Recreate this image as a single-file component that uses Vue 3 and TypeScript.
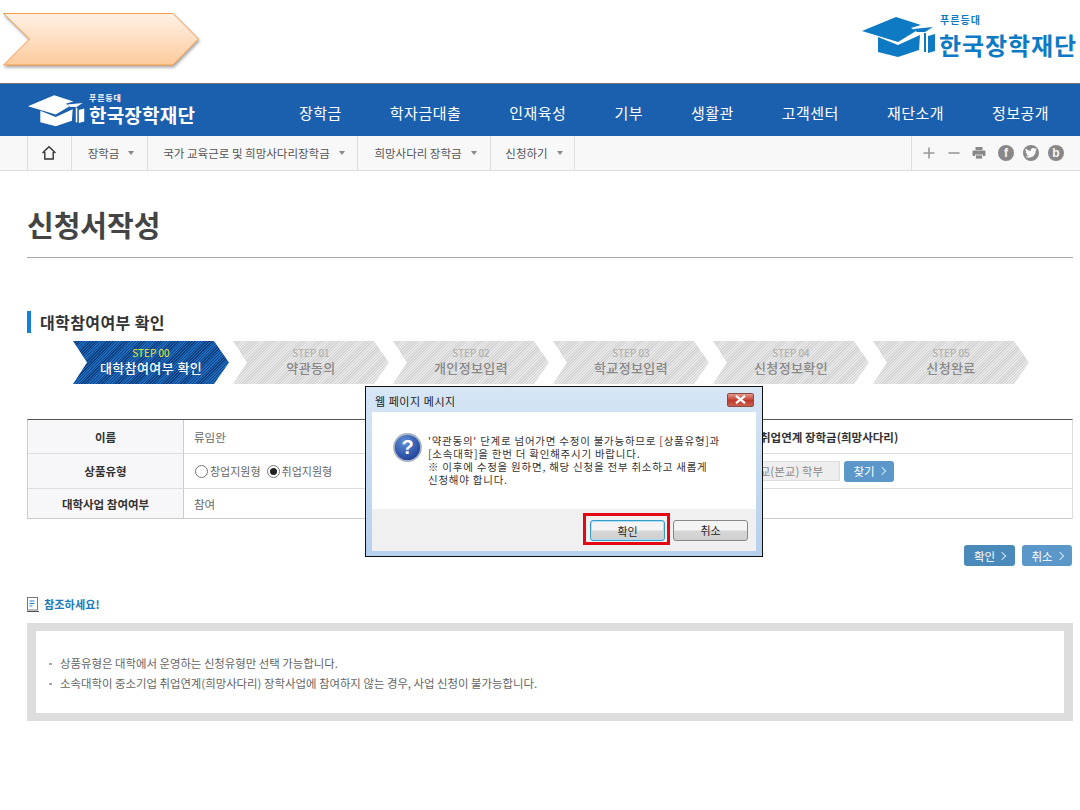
<script setup lang="ts">
const navItems: string[] = ['장학금', '학자금대출', '인재육성', '기부', '생활관', '고객센터', '재단소개', '정보공개']
const crumbs: { label: string; width: number }[] = [
  { label: '장학금', width: 76 },
  { label: '국가 교육근로 및 희망사다리장학금', width: 210 },
  { label: '희망사다리 장학금', width: 133 },
  { label: '신청하기', width: 85 },
]
const steps: { no: string; label: string; active: boolean }[] = [
  { no: 'STEP 00', label: '대학참여여부 확인', active: true },
  { no: 'STEP 01', label: '약관동의', active: false },
  { no: 'STEP 02', label: '개인정보입력', active: false },
  { no: 'STEP 03', label: '학교정보입력', active: false },
  { no: 'STEP 04', label: '신청정보확인', active: false },
  { no: 'STEP 05', label: '신청완료', active: false },
]
</script>

<template>
  <div class="page">
    <header class="top">
      <svg class="arrow" width="204" height="60" viewBox="0 0 204 60">
        <defs>
          <linearGradient id="arrowFill" x1="0" y1="0" x2="0" y2="1">
            <stop offset="0" stop-color="#fff1e6" />
            <stop offset="1" stop-color="#fdcb9c" />
          </linearGradient>
        </defs>
        <polygon class="arrow-shape" points="3.5,0.5 173,0.5 198.5,26 173,52 3.5,52 29.5,26" fill="url(#arrowFill)" stroke="#f79a4a" stroke-width="1" />
      </svg>
      <div class="logo logo-top">
        <svg class="cap" viewBox="0 0 74 44">
          <polygon points="0,17 34,3 59,11 49,14 54,17 36,28" />
          <polygon points="51,15 71,13 63,18 55,18" />
          <polygon points="16,23 36,31 58,21 57,36 36,43 16,38" />
          <rect x="62" y="19" width="2" height="19" />
          <polygon points="66,22 73,20 73,37 66,39" />
        </svg>
        <div class="logo-words">
          <span class="logo-sub">푸른등대</span>
          <span class="logo-name">한국장학재단</span>
        </div>
      </div>
    </header>

    <nav class="gnb">
      <div class="logo logo-nav">
        <svg class="cap" viewBox="0 0 74 44">
          <polygon points="0,17 34,3 59,11 49,14 54,17 36,28" />
          <polygon points="51,15 71,13 63,18 55,18" />
          <polygon points="16,23 36,31 58,21 57,36 36,43 16,38" />
          <rect x="62" y="19" width="2" height="19" />
          <polygon points="66,22 73,20 73,37 66,39" />
        </svg>
        <div class="logo-words">
          <span class="logo-sub">푸른등대</span>
          <span class="logo-name">한국장학재단</span>
        </div>
      </div>
      <ul class="gnb-list">
        <li v-for="item in navItems" :key="item">{{ item }}</li>
      </ul>
    </nav>

    <div class="crumb">
      <div class="crumb-left">
        <div class="crumb-home">
          <svg width="16" height="16" viewBox="0 0 16 16" fill="none" stroke="#333" stroke-width="1.4">
            <path d="M1.5 8 8 1.8 14.5 8M3.8 7v7h8.4V7" />
          </svg>
        </div>
        <div v-for="c in crumbs" :key="c.label" class="crumb-item" :style="{ width: c.width + 'px' }">
          <span>{{ c.label }}</span><i class="tri"></i>
        </div>
      </div>
      <div class="crumb-tools">
        <svg class="tool" width="14" height="14" viewBox="0 0 14 14" stroke="#999" stroke-width="1.6"><path d="M1.5 7h11M7 1.5v11" /></svg>
        <svg class="tool" width="14" height="14" viewBox="0 0 14 14" stroke="#999" stroke-width="1.6"><path d="M1.5 7h11" /></svg>
        <svg class="tool tool-print" width="14" height="14" viewBox="0 0 14 14" fill="#888">
          <rect x="3.5" y="1" width="7" height="3" />
          <rect x="0.5" y="4.6" width="13" height="5.4" rx="1" />
          <rect x="3.5" y="9" width="7" height="4" fill="#888" stroke="#f8f8f8" stroke-width="0.8" />
        </svg>
        <span class="sns">f</span>
        <span class="sns">
          <svg width="12" height="10" viewBox="0 0 24 20" fill="#f8f8f8">
            <path d="M24 2.4a9.6 9.6 0 0 1-2.8.8A5 5 0 0 0 23.3.5a9.8 9.8 0 0 1-3.1 1.2 4.9 4.9 0 0 0-8.4 4.5A14 14 0 0 1 1.7 1a4.9 4.9 0 0 0 1.5 6.6 4.9 4.9 0 0 1-2.2-.6 4.9 4.9 0 0 0 3.9 4.9 5 5 0 0 1-2.2.1 4.9 4.9 0 0 0 4.6 3.4A9.9 9.9 0 0 1 0 17.4 14 14 0 0 0 7.5 19.6c9.1 0 14-7.500 14-14v-.6A10 10 0 0 0 24 2.400z" />
          </svg>
        </span>
        <span class="sns">b</span>
      </div>
    </div>

    <main class="main">
      <h1 class="title">신청서작성</h1>
      <h2 class="section">대학참여여부 확인</h2>

      <ol class="steps">
        <li v-for="s in steps" :key="s.no" class="step" :class="{ on: s.active }">
          <span class="step-no">{{ s.no }}</span>
          <span class="step-label">{{ s.label }}</span>
        </li>
      </ol>

      <div class="table">
        <div class="th">이름</div>
        <div class="td">류임완</div>
        <div class="td td-right strong">취업연계 장학금(희망사다리)</div>

        <div class="th">상품유형</div>
        <div class="td radios">
          <span class="radio"></span><span>창업지원형</span>
          <span class="radio checked"></span><span>취업지원형</span>
        </div>
        <div class="td td-right search">
          <span class="field">교(본교) 학부</span>
          <span class="btn btn-sm">찾기<b class="gt"></b></span>
        </div>

        <div class="th last">대학사업 참여여부</div>
        <div class="td last">참여</div>
        <div class="td td-right last"></div>
      </div>

      <div class="actions">
        <span class="btn btn-dark">확인<b class="gt"></b></span>
        <span class="btn">취소<b class="gt"></b></span>
      </div>

      <h3 class="note-title">
        <svg width="12" height="15" viewBox="0 0 12 15" fill="none">
          <rect x="0.5" y="0.5" width="10" height="12.500" stroke="#777" />
          <path d="M2.500 4h5M2.500 6.500h5M2.500 9h3" stroke="#1f7fc4" />
          <path d="M0 14.500h12" stroke="#555" />
        </svg>
        참조하세요!
      </h3>
      <div class="note">
        <p>상품유형은 대학에서 운영하는 신청유형만 선택 가능합니다.</p>
        <p>소속대학이 중소기업 취업연계(희망사다리) 장학사업에 참여하지 않는 경우, 사업 신청이 불가능합니다.</p>
      </div>
    </main>

    <div class="dialog">
      <div class="dialog-bar">
        <span>웹 페이지 메시지</span>
        <span class="close">
          <svg width="11" height="9" viewBox="0 0 11 9" stroke="#fff" stroke-width="2.2"><path d="M1 .8l9 7.400M10 .8l-9 7.400" /></svg>
        </span>
      </div>
      <div class="dialog-body">
        <div class="dialog-msg">
          <svg class="q" width="29" height="29" viewBox="0 0 29 29">
            <defs>
              <radialGradient id="qFill" cx="0.4" cy="0.3" r="0.8">
                <stop offset="0" stop-color="#5f8fd8" />
                <stop offset="1" stop-color="#17358f" />
              </radialGradient>
            </defs>
            <circle cx="14.500" cy="14.500" r="13.500" fill="url(#qFill)" stroke="#a9b2c2" stroke-width="1.800" />
            <text x="14.500" y="21" text-anchor="middle" class="q-mark">?</text>
          </svg>
          <p>'약관동의' 단계로 넘어가면 수정이 불가능하므로 [상품유형]과<br />[소속대학]을 한번 더 확인해주시기 바랍니다.<br />※ 이후에 수정을 원하면, 해당 신청을 전부 취소하고 새롭게<br />신청해야 합니다.</p>
        </div>
        <div class="dialog-foot">
          <span class="focus-ring"><span class="win-btn primary">확인</span></span>
          <span class="win-btn">취소</span>
        </div>
      </div>
    </div>
  </div>
</template>

<style>
html, body { margin: 0; background: #fff; }
</style>

<style scoped>
.page {
  position: relative;
  width: 1080px;
  height: 810px;
  overflow: hidden;
  background: #fff;
  font-family: "Noto Sans CJK KR", "Noto Sans", sans-serif;
  color: #555;
  font-size: 11px;
}
ul, ol { list-style: none; margin: 0; padding: 0; }
h1, h2, h3, p { margin: 0; }

.top {
  height: 83px;
  display: flex;
  justify-content: space-between;
  align-items: flex-start;
  padding: 13px 3px 0 0;
  box-sizing: border-box;
}
.arrow { display: block; }
.arrow-shape { filter: drop-shadow(1px 2px 1.5px rgba(0, 0, 0, 0.35)); }

.logo { display: flex; align-items: flex-end; }
.logo-words { display: flex; flex-direction: column; }
.logo-sub, .logo-name { font-weight: 700; white-space: nowrap; }
.logo-top { color: #0e7ac4; margin-top: 1px; align-items: flex-start; }
.logo-top .cap { width: 74px; height: 44px; fill: #0e7ac4; margin-right: 3px; }
.logo-top .logo-sub { font-size: 10px; line-height: 12px; letter-spacing: 1px; margin: 0 0 4px 1px; }
.logo-top .logo-name { font-size: 24px; line-height: 30px; letter-spacing: 0.9px; }
.logo-nav { color: #fff; width: 167px; }
.logo-nav .cap { width: 57px; height: 34px; fill: #fff; margin-right: 4px; flex: none; }
.logo-nav .logo-sub { font-size: 8px; line-height: 10px; letter-spacing: 0.8px; }
.logo-nav .logo-name { font-size: 19px; line-height: 24px; letter-spacing: 0.2px; }

.gnb {
  height: 53px;
  box-sizing: border-box;
  border-top: 1px solid #777;
  background: #1b60ae;
  display: flex;
  align-items: center;
  padding-left: 28px;
}
.gnb-list {
  display: flex;
  gap: 48px;
  margin-left: 104px;
  padding-top: 5px;
  color: #fff;
  font-size: 15px;
  letter-spacing: 0.48px;
  white-space: nowrap;
}

.crumb {
  height: 35px;
  box-sizing: border-box;
  background: #f8f8f8;
  border-bottom: 1px solid #ddd;
  display: flex;
  justify-content: space-between;
  padding: 0 7px 0 27px;
}
.crumb-left { display: flex; }
.crumb-home {
  width: 41px;
  display: flex;
  align-items: center;
  justify-content: center;
  border-left: 1px solid #ddd;
  padding-right: 2px;
  box-sizing: content-box;
}
.crumb-item {
  box-sizing: border-box;
  border-left: 1px solid #ddd;
  display: flex;
  align-items: center;
  justify-content: center;
  gap: 9px;
  padding-left: 3px;
  font-size: 11.500px;
  color: #555;
  white-space: nowrap;
}
.crumb-item:last-child { border-right: 1px solid #ddd; }
.tri {
  width: 0;
  height: 0;
  border-left: 3px solid transparent;
  border-right: 3px solid transparent;
  border-top: 4px solid #888;
}
.crumb-tools {
  width: 162px;
  box-sizing: border-box;
  border-left: 1px solid #ddd;
  display: flex;
  align-items: center;
  gap: 9px;
  padding-left: 9px;
}
.tool { margin: 0 1px; }
.tool-print { margin-right: 3px; }
.sns {
  width: 16px;
  height: 16px;
  border-radius: 50%;
  background: #888;
  color: #f8f8f8;
  font-family: "Liberation Sans", sans-serif;
  font-size: 12px;
  font-weight: 700;
  line-height: 16px;
  display: flex;
  align-items: center;
  justify-content: center;
}

.main { padding: 0 7px 0 27px; }
.title {
  height: 87px;
  box-sizing: border-box;
  padding-top: 31px;
  border-bottom: 1px solid #aaa;
  font-size: 29px;
  line-height: 44px;
  font-weight: 700;
  color: #444;
}
.section {
  margin-top: 53px;
  border-left: 4px solid #1480d8;
  height: 22px;
  padding-left: 9px;
  font-size: 16px;
  line-height: 22px;
  font-weight: 700;
  color: #333;
  letter-spacing: 0.4px;
  white-space: nowrap;
}

.steps {
  display: flex;
  gap: 4px;
  margin: 8px 0 0 46px;
}
.step {
  width: 156px;
  height: 43px;
  display: flex;
  flex-direction: column;
  align-items: center;
  justify-content: flex-start;
  clip-path: polygon(0 0, 141px 0, 100% 50%, 141px 100%, 0 100%, 14px 50%);
  background: repeating-linear-gradient(135deg, #d4d4d4 0 1px, #e8e8e8 1px 2px);
  color: #888;
  white-space: nowrap;
  padding: 5px 0 0;
  box-sizing: border-box;
}
.step.on {
  background: repeating-linear-gradient(135deg, #0e3f7c 0 1px, #1c6cc2 1px 2px);
  color: #fff;
}
.step-no { font-size: 10px; line-height: 13px; color: #aaa; }
.step.on .step-no { color: #eaec2a; }
.step-label { font-size: 13px; line-height: 17px; font-weight: 500; letter-spacing: 0.4px; }

.table {
  margin-top: 35px;
  display: grid;
  grid-template-columns: 156px 1fr 384px;
  grid-template-rows: 34px 35px 30px;
  border-top: 1px solid #555;
  border-left: 1px solid #ccc;
  border-right: 1px solid #ddd;
  box-sizing: border-box;
}
.th, .td {
  display: flex;
  align-items: center;
  box-sizing: border-box;
  border-bottom: 1px solid #ddd;
  font-size: 11.500px;
  white-space: nowrap;
}
.th {
  justify-content: center;
  background: #f7f7f9;
  border-right: 1px solid #ccc;
  font-weight: 700;
  color: #333;
}
.td { padding-left: 10px; color: #666; }
.th.last, .td.last { border-bottom-color: #ccc; }
.td-right { padding-left: 72px; }
.strong { font-weight: 700; color: #333; }
.radios { gap: 2px; padding-left: 11px; font-size: 11px; }
.radio {
  width: 11px;
  height: 11px;
  border: 1px solid #777;
  border-radius: 50%;
  background: #fff;
  position: relative;
  margin-left: 4px;
}
.radio:first-child { margin-left: 0; }
.radio.checked::after {
  content: "";
  position: absolute;
  inset: 2px;
  border-radius: 50%;
  background: #222;
}
.search { padding-left: 2px; gap: 4px; }
.field {
  width: 150px;
  height: 20px;
  box-sizing: border-box;
  background: #eee;
  border: 1px solid #ddd;
  display: flex;
  align-items: center;
  justify-content: flex-end;
  padding-right: 16px;
  color: #888;
}

.btn {
  display: inline-flex;
  align-items: center;
  justify-content: center;
  gap: 6px;
  width: 50px;
  height: 21px;
  border-radius: 3px;
  background: #5b98c9;
  color: #fff;
  font-size: 11.500px;
}
.btn-dark { background: #4a8aba; width: 51px; }
.btn-sm { height: 21px; }
.gt {
  width: 5px;
  height: 5px;
  border-top: 1px solid #cfe2f1;
  border-right: 1px solid #cfe2f1;
  transform: rotate(45deg);
  margin-left: -2px;
}
.actions {
  display: flex;
  justify-content: flex-end;
  gap: 7px;
  margin-top: 26px;
  padding-right: 1px;
}
.note-title {
  display: flex;
  align-items: center;
  gap: 5px;
  margin-top: 30px;
  height: 16px;
  font-size: 11.200px;
  font-weight: 700;
  color: #1b7ab8;
}
.note {
  margin-top: 11px;
  height: 98px;
  box-sizing: border-box;
  border: 9px solid #ddd;
  border-width: 8px 9px;
  padding: 22px 0 0 13px;
  color: #666;
}
.note p {
  position: relative;
  padding-left: 11px;
  font-size: 11.400px;
  line-height: 20px;
  white-space: nowrap;
}
.note p::before {
  content: "";
  position: absolute;
  left: 0;
  top: 10px;
  width: 3px;
  height: 2px;
  background: #aaa;
}

.dialog {
  position: absolute;
  left: 365px;
  top: 386px;
  width: 398px;
  height: 171px;
  box-sizing: border-box;
  border: 1px solid #111;
  background: linear-gradient(#d7e6f5, #b5d0ec);
  padding: 0 6px 5px;
  display: flex;
  flex-direction: column;
}
.dialog-bar {
  height: 25px;
  box-sizing: border-box;
  display: flex;
  align-items: center;
  justify-content: space-between;
  padding: 3px 2px 0 3px;
  font-size: 11px;
  letter-spacing: 0.55px;
  color: #222;
  white-space: nowrap;
}
.close {
  width: 27px;
  height: 14px;
  margin-top: -3px;
  display: flex;
  align-items: center;
  justify-content: center;
  border-radius: 2px;
  border: 1px solid #8a4a42;
  box-sizing: border-box;
  background: linear-gradient(#e39a8c, #c0392b 55%, #c9604f);
}
.dialog-body {
  flex: 1;
  background: #fff;
  display: flex;
  flex-direction: column;
}
.dialog-msg {
  flex: 1;
  display: flex;
  gap: 6px;
  padding: 22px 0 0 21px;
}
.q { flex: none; margin-top: -1px; }
.q-mark {
  fill: #fff;
  font-family: "Liberation Sans", sans-serif;
  font-size: 20px;
  font-weight: 700;
}
.dialog-msg p {
  font-size: 10.500px;
  line-height: 13px;
  letter-spacing: 0.76px;
  color: #333;
  white-space: nowrap;
}
.dialog-foot {
  height: 42px;
  box-sizing: border-box;
  background: #f0f0f0;
  display: flex;
  align-items: center;
  justify-content: flex-end;
  gap: 3px;
  padding-right: 8px;
}
.focus-ring {
  border: 3px solid #e30613;
  padding: 4px 2px 1px 4px;
  margin-top: -2px;
  display: flex;
}
.win-btn {
  width: 75px;
  height: 21px;
  box-sizing: border-box;
  border: 1px solid #888;
  border-radius: 3px;
  background: linear-gradient(#f4f4f4 45%, #d6d6d6 55%, #cfcfcf);
  display: flex;
  align-items: center;
  justify-content: center;
  font-size: 11px;
  color: #222;
}
.win-btn.primary {
  border: 1px solid #3a9bc9;
  box-shadow: inset 0 0 0 1px #a8e0f5;
}
</style>
